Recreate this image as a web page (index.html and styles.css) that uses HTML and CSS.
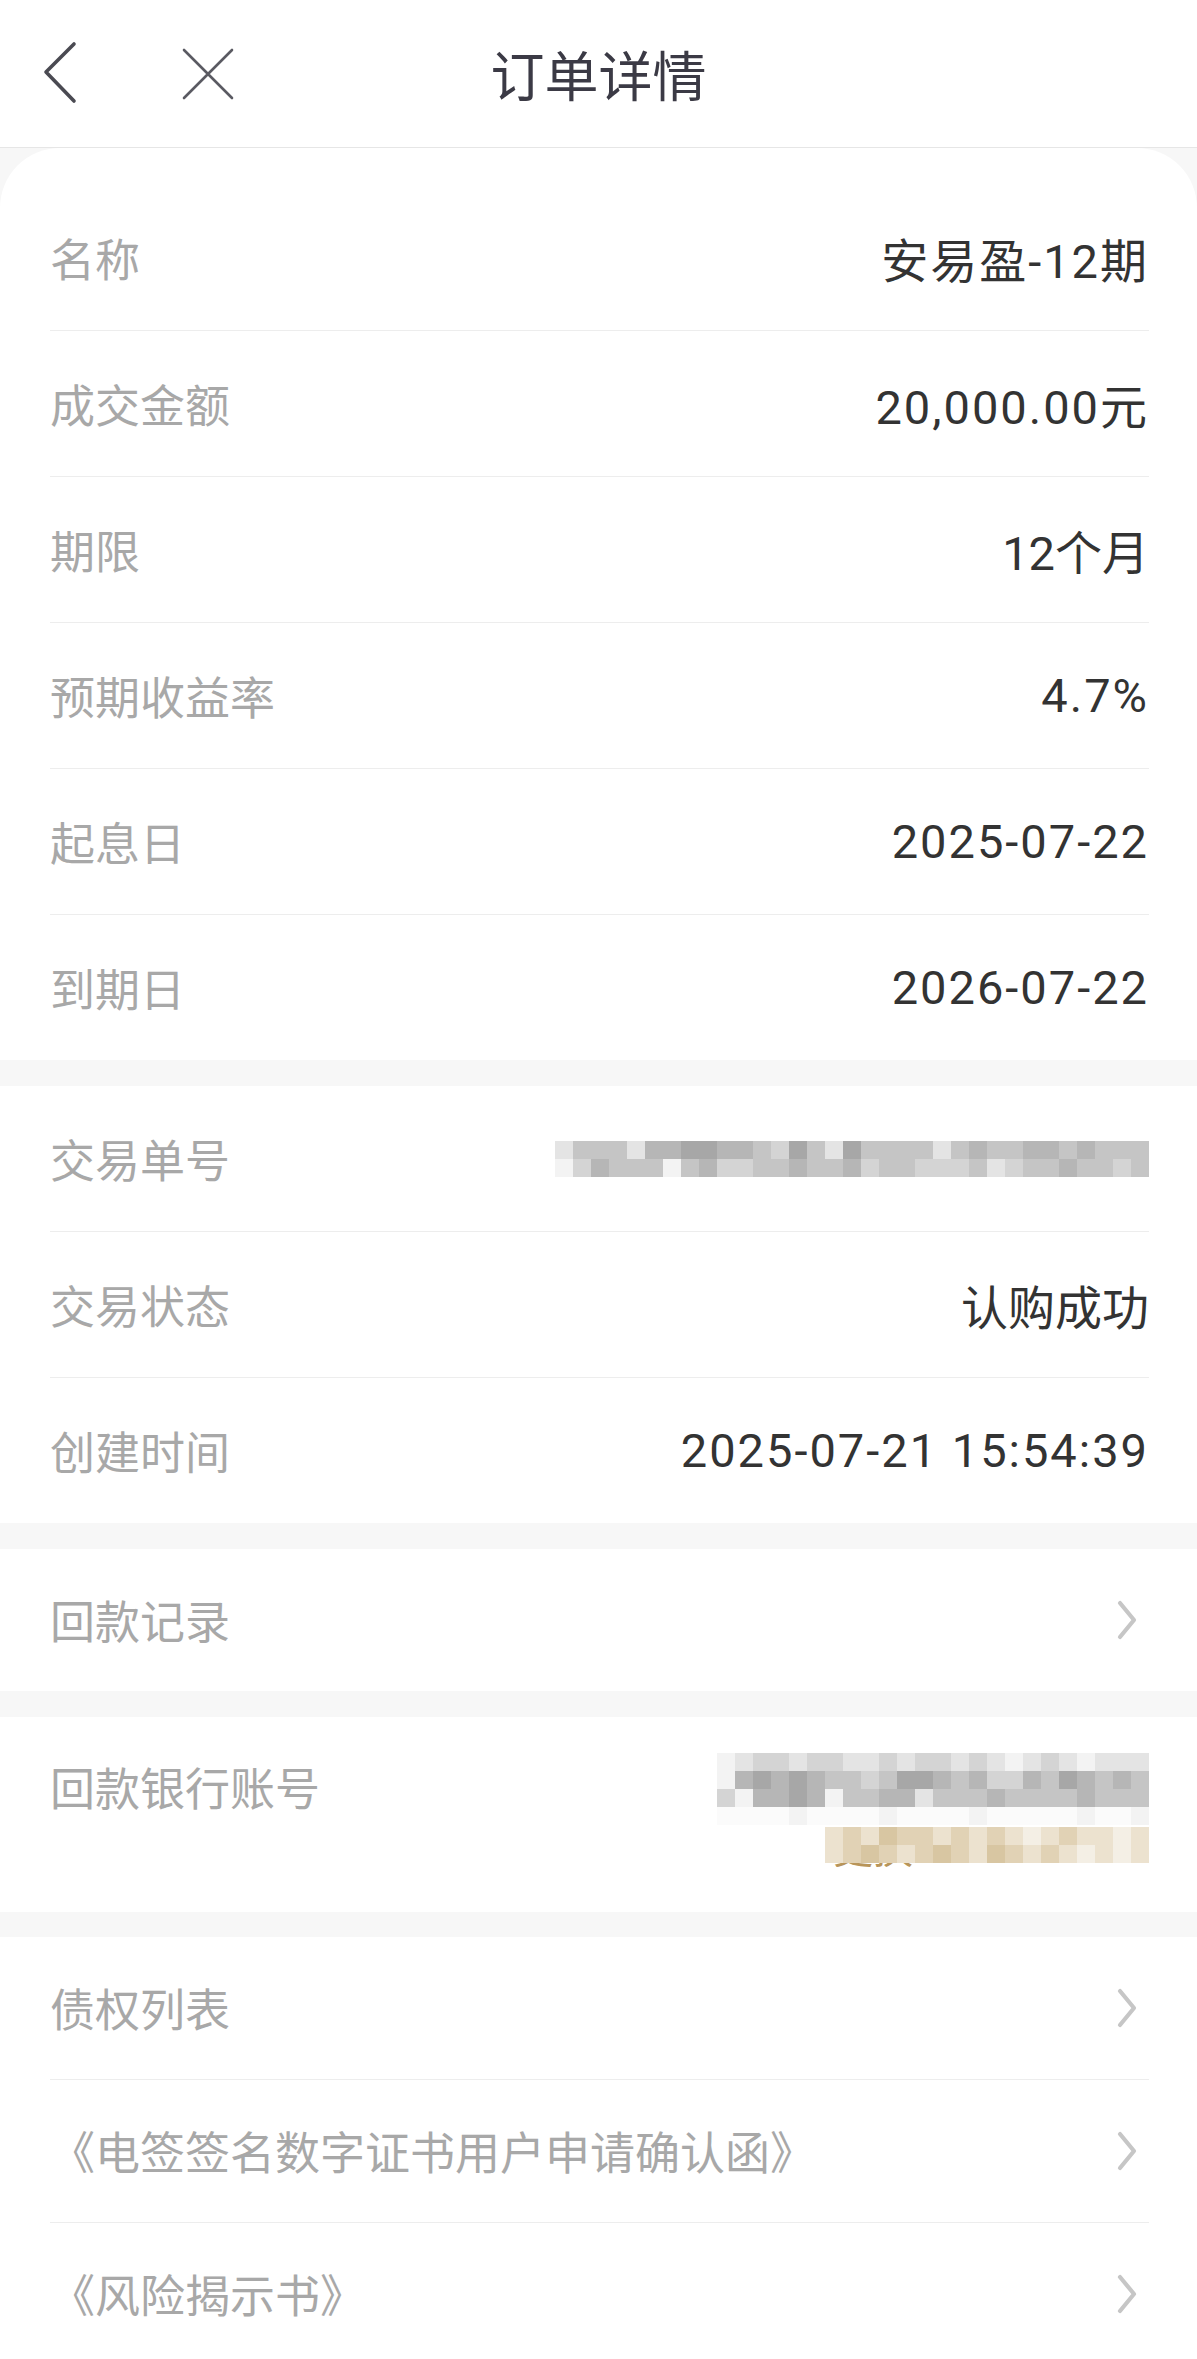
FILE: index.html
```html
<!DOCTYPE html>
<html lang="zh-CN">
<head>
    <meta charset="UTF-8">
    <meta name="viewport" content="width=device-width, initial-scale=1.0">
    <title>订单详情</title>
    <link rel="stylesheet" href="styles.css">
</head>
<body>
    <header class="topbar">
        <div class="topbar-left">
            <svg class="icon-back" width="36" height="64" viewBox="0 0 36 64">
                <path d="M32 3 L4 31 L32 60" fill="none" stroke="#4a4a52" stroke-width="3.6" stroke-linecap="round" stroke-linejoin="round"/>
            </svg>
            <svg class="icon-close" width="52" height="52" viewBox="0 0 52 52">
                <path d="M2 2 L50 50 M50 2 L2 50" fill="none" stroke="#5a5a62" stroke-width="2.6" stroke-linecap="round"/>
            </svg>
        </div>
        <h1 class="title">订单详情</h1>
        <div></div>
    </header>

    <section class="card card-first">
        <div class="row"><span class="label">名称</span><span class="value num">安易盈-12期</span></div>
        <div class="row"><span class="label">成交金额</span><span class="value num">20,000.00元</span></div>
        <div class="row"><span class="label">期限</span><span class="value">12个月</span></div>
        <div class="row"><span class="label">预期收益率</span><span class="value num">4.7%</span></div>
        <div class="row"><span class="label">起息日</span><span class="value num">2025-07-22</span></div>
        <div class="row"><span class="label">到期日</span><span class="value num">2026-07-22</span></div>
    </section>

    <section class="card">
        <div class="row">
            <span class="label">交易单号</span>
            <div class="mosaic mosaic-order">
                <i class="e"></i><i class="c"></i><i class="c"></i><i class="c"></i><i class="e"></i><i class="b"></i><i class="b"></i><i class="a"></i><i class="a"></i><i class="b"></i><i class="b"></i><i class="c"></i><i class="d"></i><i class="a"></i><i class="c"></i><i class="e"></i><i class="a"></i><i class="c"></i><i class="c"></i><i class="c"></i><i class="c"></i><i class="e"></i><i class="c"></i><i class="b"></i><i class="c"></i><i class="c"></i><i class="b"></i><i class="b"></i><i class="c"></i><i class="b"></i><i class="c"></i><i class="c"></i><i class="c"></i>
                <i class="f"></i><i class="d"></i><i class="b"></i><i class="c"></i><i class="c"></i><i class="c"></i><i class="f"></i><i class="c"></i><i class="b"></i><i class="d"></i><i class="d"></i><i class="c"></i><i class="c"></i><i class="b"></i><i class="c"></i><i class="c"></i><i class="b"></i><i class="d"></i><i class="c"></i><i class="c"></i><i class="d"></i><i class="d"></i><i class="d"></i><i class="c"></i><i class="e"></i><i class="d"></i><i class="c"></i><i class="c"></i><i class="b"></i><i class="c"></i><i class="c"></i><i class="d"></i><i class="c"></i>
            </div>
        </div>
        <div class="row"><span class="label">交易状态</span><span class="value">认购成功</span></div>
        <div class="row"><span class="label">创建时间</span><span class="value num">2025-07-21 15:54:39</span></div>
    </section>

    <section class="card">
        <div class="row row-link">
            <span class="label">回款记录</span>
            <svg class="chevron" width="24" height="40" viewBox="0 0 24 40"><path d="M5 3 L19 20 L5 37" fill="none" stroke="#c6c6c6" stroke-width="4.2" stroke-linecap="round" stroke-linejoin="round"/></svg>
        </div>
    </section>

    <section class="card card-bank">
        <span class="label">回款银行账号</span>
        <div class="bank-value">
            <div class="mosaic mosaic-bank">
                <i class="f"></i><i class="e"></i><i class="d"></i><i class="d"></i><i class="e"></i><i class="d"></i><i class="d"></i><i class="e"></i><i class="e"></i><i class="d"></i><i class="e"></i><i class="d"></i><i class="d"></i><i class="e"></i><i class="d"></i><i class="e"></i><i class="f"></i><i class="e"></i><i class="d"></i><i class="e"></i><i class="f"></i><i class="e"></i><i class="e"></i><i class="e"></i>
                <i class="f"></i><i class="b"></i><i class="a"></i><i class="b"></i><i class="a"></i><i class="b"></i><i class="c"></i><i class="c"></i><i class="d"></i><i class="c"></i><i class="a"></i><i class="a"></i><i class="b"></i><i class="c"></i><i class="b"></i><i class="d"></i><i class="d"></i><i class="b"></i><i class="c"></i><i class="a"></i><i class="b"></i><i class="c"></i><i class="b"></i><i class="c"></i>
                <i class="d"></i><i class="f"></i><i class="b"></i><i class="b"></i><i class="a"></i><i class="b"></i><i class="f"></i><i class="c"></i><i class="c"></i><i class="b"></i><i class="b"></i><i class="e"></i><i class="c"></i><i class="c"></i><i class="c"></i><i class="b"></i><i class="c"></i><i class="c"></i><i class="c"></i><i class="c"></i><i class="b"></i><i class="c"></i><i class="c"></i><i class="c"></i>
                <i class="w"></i><i class="w"></i><i class="w"></i><i class="w"></i><i class="f"></i><i class="w"></i><i class="w"></i><i class="w"></i><i class="w"></i><i class="f"></i><i class="w"></i><i class="w"></i><i class="w"></i><i class="w"></i><i class="f"></i><i class="w"></i><i class="w"></i><i class="w"></i><i class="w"></i><i class="w"></i><i class="f"></i><i class="w"></i><i class="w"></i><i class="f"></i>
            </div>
            <div class="change">
                <span class="change-text">更换</span>
                <div class="mosaic mosaic-gold">
                    <i class="g1"></i><i class="g2"></i><i class="g1"></i><i class="g3"></i><i class="g2"></i><i class="g2"></i><i class="g1"></i><i class="g2"></i><i class="g1"></i><i class="g2"></i><i class="g1"></i><i class="g4"></i><i class="g1"></i><i class="g2"></i><i class="g1"></i><i class="g1"></i><i class="g4"></i><i class="g1"></i>
                    <i class="g1"></i><i class="g2"></i><i class="g3"></i><i class="g2"></i><i class="g1"></i><i class="g2"></i><i class="g3"></i><i class="g2"></i><i class="g1"></i><i class="g3"></i><i class="g2"></i><i class="g1"></i><i class="g2"></i><i class="g1"></i><i class="g4"></i><i class="g1"></i><i class="g4"></i><i class="g1"></i>
                </div>
            </div>
        </div>
    </section>

    <section class="card">
        <div class="row row-link">
            <span class="label">债权列表</span>
            <svg class="chevron" width="24" height="40" viewBox="0 0 24 40"><path d="M5 3 L19 20 L5 37" fill="none" stroke="#c6c6c6" stroke-width="4.2" stroke-linecap="round" stroke-linejoin="round"/></svg>
        </div>
        <div class="row row-link">
            <span class="label">《电签签名数字证书用户申请确认函》</span>
            <svg class="chevron" width="24" height="40" viewBox="0 0 24 40"><path d="M5 3 L19 20 L5 37" fill="none" stroke="#c6c6c6" stroke-width="4.2" stroke-linecap="round" stroke-linejoin="round"/></svg>
        </div>
        <div class="row row-link">
            <span class="label">《风险揭示书》</span>
            <svg class="chevron" width="24" height="40" viewBox="0 0 24 40"><path d="M5 3 L19 20 L5 37" fill="none" stroke="#c6c6c6" stroke-width="4.2" stroke-linecap="round" stroke-linejoin="round"/></svg>
        </div>
    </section>
</body>
</html>
```

FILE: styles.css
```css
body {
    margin: 0;
    background-color: #f7f7f7;
    font-family: "Noto Sans CJK SC", "Noto Sans", sans-serif;
}
.topbar {
    display: grid;
    grid-template-columns: 1fr auto 1fr;
    align-items: center;
    height: 147px;
    background: white;
    border-bottom: 1px solid #e6e6e6;
}
.topbar-left {
    display: flex;
    align-items: center;
    padding-left: 42px;
    gap: 104px;
}
.icon-back {
    margin-top: -2px;
}
.title {
    margin: 0;
    font-size: 54px;
    font-weight: normal;
    color: #3b3a45;
}
.card {
    background: white;
    margin-bottom: 26px;
}
.card-first {
    border-radius: 60px 60px 0 0;
    padding-top: 37px;
}
.row {
    display: flex;
    justify-content: space-between;
    align-items: center;
    height: 145px;
    margin: 0 48px 0 50px;
    border-bottom: 1px solid #ededed;
}
.row:last-child {
    border-bottom: none;
}
.row-link {
    height: 142px;
}
.label {
    font-size: 45px;
    color: #a8a8a8;
    line-height: 62px;
}
.value {
    font-family: Roboto, "Noto Sans CJK SC", sans-serif;
    font-size: 47px;
    color: #333333;
}
.num {
    letter-spacing: 2px;
}
.chevron {
    margin-right: 10px;
}
.mosaic {
    display: grid;
}
.mosaic i {
    display: block;
}
.mosaic-order {
    grid-template-columns: repeat(33, 18px);
    grid-auto-rows: 18px;
}
.mosaic-bank {
    grid-template-columns: repeat(24, 18px);
    grid-auto-rows: 18px;
}
.mosaic-gold {
    position: absolute;
    top: 0;
    right: 0;
    grid-template-columns: repeat(18, 18px);
    grid-auto-rows: 18px;
}
.a { background: #a7a7a7; }
.b { background: #b6b6b6; }
.c { background: #c5c5c5; }
.d { background: #d4d4d4; }
.e { background: #e4e4e4; }
.f { background: #f3f3f3; }
.w { background: #fbfbfb; }
.g1 { background: #ece2cf; }
.g2 { background: #e1d2b5; }
.g3 { background: #d8c6a2; }
.g4 { background: #f4efe5; }
.card-bank {
    display: flex;
    justify-content: space-between;
    align-items: flex-start;
    height: 195px;
    box-sizing: border-box;
    padding: 39px 48px 0 50px;
    margin-bottom: 25px;
}
.bank-value {
    display: flex;
    flex-direction: column;
    align-items: flex-end;
    margin-top: -3px;
}
.change {
    position: relative;
    width: 324px;
    height: 42px;
    margin-top: 2px;
}
.change-text {
    position: absolute;
    left: 8px;
    top: -6px;
    font-size: 40px;
    line-height: 50px;
    color: #b8955a;
}
```
